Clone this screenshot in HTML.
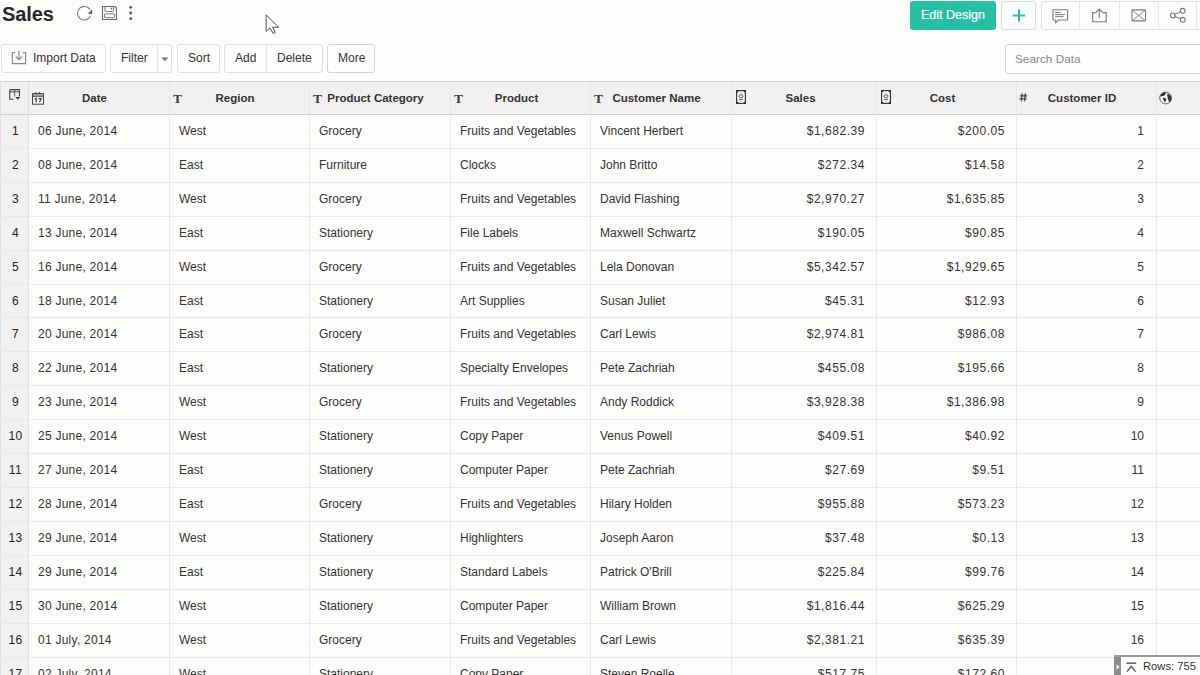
<!DOCTYPE html>
<html><head><meta charset="utf-8">
<style>
*{margin:0;padding:0;box-sizing:border-box}
html,body{width:1200px;height:675px;overflow:hidden;background:#fdfdfb;font-family:"Liberation Sans",sans-serif;color:#333;position:relative}
.abs{position:absolute}
.title{position:absolute;left:2px;top:3px;font-size:20px;font-weight:bold;color:#262626;letter-spacing:-0.1px}
.btn{position:absolute;top:44px;height:29px;border:1px solid #e0e0e0;border-radius:3px;background:#fdfdfd;font-size:12px;color:#333;line-height:27px}
.btn span{position:absolute;top:0}
.sep{position:absolute;top:0;bottom:0;width:1px;background:#e6e6e6}
.edit{position:absolute;left:910px;top:1px;width:86px;height:29px;background:#27bfa3;border-radius:3px;color:#fff;font-size:12.5px;line-height:28px;text-align:center;-webkit-text-stroke:0.2px #fff}
.plus{position:absolute;left:1001px;top:1px;width:35px;height:29px;border:1px solid #dcdcdf;border-radius:3px;background:#fdfdfd}
.grp{position:absolute;left:1041px;top:1px;width:170px;height:29px;border:1px solid #e0e0e2;border-radius:3px;background:#fdfdfd}
.search{position:absolute;left:1005px;top:44px;width:210px;height:30px;border:1px solid #d6d6d6;border-radius:3px;background:#fdfdfd;font-size:11.8px;color:#8a8a8a;line-height:28px;padding-left:9px}
.hdr{position:absolute;left:0;top:81px;width:1200px;height:34px;background:#f1f1f1;border-top:1px solid #d6d6d6;border-bottom:1px solid #d0d0d0;border-left:1px solid #e2e2e2}
.rncol{position:absolute;left:0;top:115px;width:28px;height:560px;background:#f1f1f1;border-left:1px solid #e2e2e2}
.vl{position:absolute;top:82px;height:593px;width:1px;background:#e8e8eb}
.hl{position:absolute;left:0;width:1200px;height:1px;background:#e9e9eb}
.hd{position:absolute;top:82px;height:32px;line-height:32px;font-size:11.5px;font-weight:bold;color:#333;text-align:center}
.ti{position:absolute;top:0;font-family:"Liberation Serif",serif;font-weight:bold;font-size:13.5px;color:#3a3a3a;line-height:15px}
.rn{position:absolute;left:2px;width:27px;height:34px;line-height:32px;text-align:center;font-size:12px;color:#222;letter-spacing:.4px}
.c{position:absolute;height:34px;line-height:32px;font-size:12px;color:#333;padding-left:10px;white-space:nowrap}
.c.d{letter-spacing:.25px}
.c.r{text-align:right;padding-left:0;padding-right:11px;letter-spacing:.55px}
.c.id{padding-right:12px;letter-spacing:0}
.rows{position:absolute;left:1114px;top:655px;width:86px;height:20px;background:#fdfdfd;border-top:2px solid #9a9a9a}
</style></head><body>
<div class="title">Sales</div>
<!-- refresh -->
<svg class="abs" style="left:76px;top:5px" width="17" height="16" viewBox="0 0 17 16">
<path d="M14.1 4.6 A6.8 6.8 0 1 0 14.4 11.3" fill="none" stroke="#7a7a7a" stroke-width="1.1"/>
<path d="M16.2 4.4 L16.2 8.8 L11.8 8.8 Z" fill="#505050"/>
</svg>
<!-- save -->
<svg class="abs" style="left:101px;top:5px" width="17" height="16" viewBox="0 0 17 16">
<path d="M1.5 1.5 H14.2 L15.5 2.8 V14.5 H1.5 Z" fill="none" stroke="#6a6a6a" stroke-width="1.1"/>
<path d="M3.9 1.5 V5.2 Q3.9 6.5 5 6.5 H11.6 Q12.6 6.5 12.6 5.2 V1.5" fill="none" stroke="#7a7a7a" stroke-width="1"/>
<rect x="3.5" y="8.9" width="10" height="3.8" rx="0.6" fill="none" stroke="#7a7a7a" stroke-width="1"/>
<rect x="9.6" y="2.8" width="1.6" height="1.4" fill="#555"/>
</svg>
<!-- dots -->
<svg class="abs" style="left:127px;top:4px" width="8" height="18" viewBox="0 0 8 18">
<circle cx="3.7" cy="3.3" r="1.4" fill="#555"/><circle cx="3.7" cy="9" r="1.4" fill="#555"/><circle cx="3.7" cy="14.7" r="1.4" fill="#555"/>
</svg>
<!-- cursor -->
<svg class="abs" style="left:264px;top:13px" width="18" height="24" viewBox="0 0 18 24">
<path d="M2.1 1.8 L2.1 18.4 L6 15 L9 20.5 L11.3 19.5 L8.6 14.2 L14.6 14.3 Z" fill="#fff" stroke="#505050" stroke-width="1" stroke-linejoin="round"/>
</svg>

<div class="edit">Edit Design</div>
<div class="plus"><svg class="abs" style="left:10px;top:7px" width="14" height="13" viewBox="0 0 14 13"><path d="M7 0.4 V12.4 M0.8 6.4 H13.2" stroke="#27bfa3" stroke-width="2"/></svg></div>
<div class="grp">
  <div class="sep" style="left:37px"></div>
  <div class="sep" style="left:77px"></div>
  <div class="sep" style="left:116px"></div>
  <div class="sep" style="left:154px"></div>
  <!-- comment -->
  <svg class="abs" style="left:10px;top:7px" width="18" height="16" viewBox="0 0 18 16">
  <path d="M1.5 0.8 H15 Q15.6 0.8 15.6 1.4 V10.4 Q15.6 11 15 11 H6.4 L3.4 14 V11 H1.5 Q0.9 11 0.9 10.4 V1.4 Q0.9 0.8 1.5 0.8 Z" fill="none" stroke="#7c7c7c" stroke-width="1.1" stroke-linejoin="round"/>
  <path d="M3.2 3.5 H8.8 M3.2 5.5 H12.8 M3.2 7.4 H11.7" stroke="#808080" stroke-width="1"/>
  </svg>
  <!-- export -->
  <svg class="abs" style="left:49px;top:5px" width="17" height="17" viewBox="0 0 17 17">
  <path d="M3.9 5.6 H1.6 V14.8 H15.2 V5.6 H12.4" fill="none" stroke="#7a7a7a" stroke-width="1.1"/>
  <path d="M8.3 10.8 V2.2 M4.2 6.2 L8.3 2 L12.4 6.2" fill="none" stroke="#7a7a7a" stroke-width="1.1"/>
  </svg>
  <!-- mail -->
  <svg class="abs" style="left:89px;top:6px" width="17" height="15" viewBox="0 0 17 15">
  <rect x="0.9" y="1.9" width="13.6" height="11" rx="0.8" fill="none" stroke="#7a7a7a" stroke-width="1.1"/>
  <path d="M1.2 2.2 L7.7 7.4 L14.2 2.2 M1.2 12.6 L7.7 7.4 L14.2 12.6" fill="none" stroke="#7f7f7f" stroke-width="0.9"/>
  </svg>
  <!-- share -->
  <svg class="abs" style="left:127px;top:5px" width="18" height="18" viewBox="0 0 18 18">
  <circle cx="13.7" cy="3.8" r="2.4" fill="none" stroke="#777" stroke-width="1.1"/>
  <circle cx="3.8" cy="8.4" r="2.4" fill="none" stroke="#777" stroke-width="1.1"/>
  <circle cx="13.7" cy="12.8" r="2.4" fill="none" stroke="#777" stroke-width="1.1"/>
  <path d="M5.9 7.3 L11.6 4.9 M5.9 9.5 L11.6 11.7" stroke="#777" stroke-width="1"/>
  </svg>
</div>

<!-- toolbar -->
<div class="btn" style="left:1px;width:105px">
  <svg class="abs" style="left:9px;top:6px" width="16" height="14" viewBox="0 0 16 14">
  <path d="M4 1.6 H1.3 V12.6 H14.6 V1.6 H12" fill="none" stroke="#8a8a8a" stroke-width="1.2"/>
  <path d="M8 0 V8.4 M4.8 5.4 L8 8.6 L11.2 5.4" fill="none" stroke="#8a8a8a" stroke-width="1.2"/>
  </svg>
  <span style="left:31px">Import Data</span>
</div>
<div class="btn" style="left:110px;width:62px">
  <span style="left:10px">Filter</span>
  <div class="sep" style="left:46px"></div>
  <svg class="abs" style="left:50px;top:12px" width="8" height="5" viewBox="0 0 8 5"><path d="M0.3 0.6 H7.3 L3.8 4.2 Z" fill="#777"/></svg>
</div>
<div class="btn" style="left:177px;width:43px"><span style="left:10px">Sort</span></div>
<div class="btn" style="left:224px;width:99px">
  <span style="left:10px">Add</span>
  <div class="sep" style="left:41px"></div>
  <span style="left:52px">Delete</span>
</div>
<div class="btn" style="left:327px;width:48px;border-color:#d4d4d4"><span style="left:10px">More</span></div>
<div class="search">Search Data</div>

<!-- table -->
<div class="hdr"></div>
<div class="rncol"></div>
<div class="vl" style="left:28px;background:#dedede"></div>
<div class="vl" style="left:169px"></div>
<div class="vl" style="left:309px"></div>
<div class="vl" style="left:450px"></div>
<div class="vl" style="left:590px"></div>
<div class="vl" style="left:731px"></div>
<div class="vl" style="left:876px"></div>
<div class="vl" style="left:1016px"></div>
<div class="vl" style="left:1156px"></div>
<div class="hl" style="top:148px"></div>
<div class="hl" style="top:182px"></div>
<div class="hl" style="top:216px"></div>
<div class="hl" style="top:250px"></div>
<div class="hl" style="top:284px"></div>
<div class="hl" style="top:317px"></div>
<div class="hl" style="top:351px"></div>
<div class="hl" style="top:385px"></div>
<div class="hl" style="top:419px"></div>
<div class="hl" style="top:453px"></div>
<div class="hl" style="top:487px"></div>
<div class="hl" style="top:521px"></div>
<div class="hl" style="top:555px"></div>
<div class="hl" style="top:589px"></div>
<div class="hl" style="top:623px"></div>
<div class="hl" style="top:657px"></div>
<div class="hl" style="top:691px"></div>
<div class="rn" style="top:115px">1</div>
<div class="c d" style="top:115px;left:28px;width:141px">06 June, 2014</div>
<div class="c" style="top:115px;left:169px;width:140px">West</div>
<div class="c" style="top:115px;left:309px;width:141px">Grocery</div>
<div class="c" style="top:115px;left:450px;width:140px">Fruits and Vegetables</div>
<div class="c" style="top:115px;left:590px;width:141px">Vincent Herbert</div>
<div class="c r" style="top:115px;left:731px;width:145px">$1,682.39</div>
<div class="c r" style="top:115px;left:876px;width:140px">$200.05</div>
<div class="c r id" style="top:115px;left:1016px;width:140px">1</div>
<div class="rn" style="top:149px">2</div>
<div class="c d" style="top:149px;left:28px;width:141px">08 June, 2014</div>
<div class="c" style="top:149px;left:169px;width:140px">East</div>
<div class="c" style="top:149px;left:309px;width:141px">Furniture</div>
<div class="c" style="top:149px;left:450px;width:140px">Clocks</div>
<div class="c" style="top:149px;left:590px;width:141px">John Britto</div>
<div class="c r" style="top:149px;left:731px;width:145px">$272.34</div>
<div class="c r" style="top:149px;left:876px;width:140px">$14.58</div>
<div class="c r id" style="top:149px;left:1016px;width:140px">2</div>
<div class="rn" style="top:183px">3</div>
<div class="c d" style="top:183px;left:28px;width:141px">11 June, 2014</div>
<div class="c" style="top:183px;left:169px;width:140px">West</div>
<div class="c" style="top:183px;left:309px;width:141px">Grocery</div>
<div class="c" style="top:183px;left:450px;width:140px">Fruits and Vegetables</div>
<div class="c" style="top:183px;left:590px;width:141px">David Flashing</div>
<div class="c r" style="top:183px;left:731px;width:145px">$2,970.27</div>
<div class="c r" style="top:183px;left:876px;width:140px">$1,635.85</div>
<div class="c r id" style="top:183px;left:1016px;width:140px">3</div>
<div class="rn" style="top:217px">4</div>
<div class="c d" style="top:217px;left:28px;width:141px">13 June, 2014</div>
<div class="c" style="top:217px;left:169px;width:140px">East</div>
<div class="c" style="top:217px;left:309px;width:141px">Stationery</div>
<div class="c" style="top:217px;left:450px;width:140px">File Labels</div>
<div class="c" style="top:217px;left:590px;width:141px">Maxwell Schwartz</div>
<div class="c r" style="top:217px;left:731px;width:145px">$190.05</div>
<div class="c r" style="top:217px;left:876px;width:140px">$90.85</div>
<div class="c r id" style="top:217px;left:1016px;width:140px">4</div>
<div class="rn" style="top:251px">5</div>
<div class="c d" style="top:251px;left:28px;width:141px">16 June, 2014</div>
<div class="c" style="top:251px;left:169px;width:140px">West</div>
<div class="c" style="top:251px;left:309px;width:141px">Grocery</div>
<div class="c" style="top:251px;left:450px;width:140px">Fruits and Vegetables</div>
<div class="c" style="top:251px;left:590px;width:141px">Lela Donovan</div>
<div class="c r" style="top:251px;left:731px;width:145px">$5,342.57</div>
<div class="c r" style="top:251px;left:876px;width:140px">$1,929.65</div>
<div class="c r id" style="top:251px;left:1016px;width:140px">5</div>
<div class="rn" style="top:285px">6</div>
<div class="c d" style="top:285px;left:28px;width:141px">18 June, 2014</div>
<div class="c" style="top:285px;left:169px;width:140px">East</div>
<div class="c" style="top:285px;left:309px;width:141px">Stationery</div>
<div class="c" style="top:285px;left:450px;width:140px">Art Supplies</div>
<div class="c" style="top:285px;left:590px;width:141px">Susan Juliet</div>
<div class="c r" style="top:285px;left:731px;width:145px">$45.31</div>
<div class="c r" style="top:285px;left:876px;width:140px">$12.93</div>
<div class="c r id" style="top:285px;left:1016px;width:140px">6</div>
<div class="rn" style="top:318px">7</div>
<div class="c d" style="top:318px;left:28px;width:141px">20 June, 2014</div>
<div class="c" style="top:318px;left:169px;width:140px">East</div>
<div class="c" style="top:318px;left:309px;width:141px">Grocery</div>
<div class="c" style="top:318px;left:450px;width:140px">Fruits and Vegetables</div>
<div class="c" style="top:318px;left:590px;width:141px">Carl Lewis</div>
<div class="c r" style="top:318px;left:731px;width:145px">$2,974.81</div>
<div class="c r" style="top:318px;left:876px;width:140px">$986.08</div>
<div class="c r id" style="top:318px;left:1016px;width:140px">7</div>
<div class="rn" style="top:352px">8</div>
<div class="c d" style="top:352px;left:28px;width:141px">22 June, 2014</div>
<div class="c" style="top:352px;left:169px;width:140px">East</div>
<div class="c" style="top:352px;left:309px;width:141px">Stationery</div>
<div class="c" style="top:352px;left:450px;width:140px">Specialty Envelopes</div>
<div class="c" style="top:352px;left:590px;width:141px">Pete Zachriah</div>
<div class="c r" style="top:352px;left:731px;width:145px">$455.08</div>
<div class="c r" style="top:352px;left:876px;width:140px">$195.66</div>
<div class="c r id" style="top:352px;left:1016px;width:140px">8</div>
<div class="rn" style="top:386px">9</div>
<div class="c d" style="top:386px;left:28px;width:141px">23 June, 2014</div>
<div class="c" style="top:386px;left:169px;width:140px">West</div>
<div class="c" style="top:386px;left:309px;width:141px">Grocery</div>
<div class="c" style="top:386px;left:450px;width:140px">Fruits and Vegetables</div>
<div class="c" style="top:386px;left:590px;width:141px">Andy Roddick</div>
<div class="c r" style="top:386px;left:731px;width:145px">$3,928.38</div>
<div class="c r" style="top:386px;left:876px;width:140px">$1,386.98</div>
<div class="c r id" style="top:386px;left:1016px;width:140px">9</div>
<div class="rn" style="top:420px">10</div>
<div class="c d" style="top:420px;left:28px;width:141px">25 June, 2014</div>
<div class="c" style="top:420px;left:169px;width:140px">West</div>
<div class="c" style="top:420px;left:309px;width:141px">Stationery</div>
<div class="c" style="top:420px;left:450px;width:140px">Copy Paper</div>
<div class="c" style="top:420px;left:590px;width:141px">Venus Powell</div>
<div class="c r" style="top:420px;left:731px;width:145px">$409.51</div>
<div class="c r" style="top:420px;left:876px;width:140px">$40.92</div>
<div class="c r id" style="top:420px;left:1016px;width:140px">10</div>
<div class="rn" style="top:454px">11</div>
<div class="c d" style="top:454px;left:28px;width:141px">27 June, 2014</div>
<div class="c" style="top:454px;left:169px;width:140px">East</div>
<div class="c" style="top:454px;left:309px;width:141px">Stationery</div>
<div class="c" style="top:454px;left:450px;width:140px">Computer Paper</div>
<div class="c" style="top:454px;left:590px;width:141px">Pete Zachriah</div>
<div class="c r" style="top:454px;left:731px;width:145px">$27.69</div>
<div class="c r" style="top:454px;left:876px;width:140px">$9.51</div>
<div class="c r id" style="top:454px;left:1016px;width:140px">11</div>
<div class="rn" style="top:488px">12</div>
<div class="c d" style="top:488px;left:28px;width:141px">28 June, 2014</div>
<div class="c" style="top:488px;left:169px;width:140px">East</div>
<div class="c" style="top:488px;left:309px;width:141px">Grocery</div>
<div class="c" style="top:488px;left:450px;width:140px">Fruits and Vegetables</div>
<div class="c" style="top:488px;left:590px;width:141px">Hilary Holden</div>
<div class="c r" style="top:488px;left:731px;width:145px">$955.88</div>
<div class="c r" style="top:488px;left:876px;width:140px">$573.23</div>
<div class="c r id" style="top:488px;left:1016px;width:140px">12</div>
<div class="rn" style="top:522px">13</div>
<div class="c d" style="top:522px;left:28px;width:141px">29 June, 2014</div>
<div class="c" style="top:522px;left:169px;width:140px">West</div>
<div class="c" style="top:522px;left:309px;width:141px">Stationery</div>
<div class="c" style="top:522px;left:450px;width:140px">Highlighters</div>
<div class="c" style="top:522px;left:590px;width:141px">Joseph Aaron</div>
<div class="c r" style="top:522px;left:731px;width:145px">$37.48</div>
<div class="c r" style="top:522px;left:876px;width:140px">$0.13</div>
<div class="c r id" style="top:522px;left:1016px;width:140px">13</div>
<div class="rn" style="top:556px">14</div>
<div class="c d" style="top:556px;left:28px;width:141px">29 June, 2014</div>
<div class="c" style="top:556px;left:169px;width:140px">East</div>
<div class="c" style="top:556px;left:309px;width:141px">Stationery</div>
<div class="c" style="top:556px;left:450px;width:140px">Standard Labels</div>
<div class="c" style="top:556px;left:590px;width:141px">Patrick O&#x27;Brill</div>
<div class="c r" style="top:556px;left:731px;width:145px">$225.84</div>
<div class="c r" style="top:556px;left:876px;width:140px">$99.76</div>
<div class="c r id" style="top:556px;left:1016px;width:140px">14</div>
<div class="rn" style="top:590px">15</div>
<div class="c d" style="top:590px;left:28px;width:141px">30 June, 2014</div>
<div class="c" style="top:590px;left:169px;width:140px">West</div>
<div class="c" style="top:590px;left:309px;width:141px">Stationery</div>
<div class="c" style="top:590px;left:450px;width:140px">Computer Paper</div>
<div class="c" style="top:590px;left:590px;width:141px">William Brown</div>
<div class="c r" style="top:590px;left:731px;width:145px">$1,816.44</div>
<div class="c r" style="top:590px;left:876px;width:140px">$625.29</div>
<div class="c r id" style="top:590px;left:1016px;width:140px">15</div>
<div class="rn" style="top:624px">16</div>
<div class="c d" style="top:624px;left:28px;width:141px">01 July, 2014</div>
<div class="c" style="top:624px;left:169px;width:140px">West</div>
<div class="c" style="top:624px;left:309px;width:141px">Grocery</div>
<div class="c" style="top:624px;left:450px;width:140px">Fruits and Vegetables</div>
<div class="c" style="top:624px;left:590px;width:141px">Carl Lewis</div>
<div class="c r" style="top:624px;left:731px;width:145px">$2,381.21</div>
<div class="c r" style="top:624px;left:876px;width:140px">$635.39</div>
<div class="c r id" style="top:624px;left:1016px;width:140px">16</div>
<div class="rn" style="top:658px">17</div>
<div class="c d" style="top:658px;left:28px;width:141px">02 July, 2014</div>
<div class="c" style="top:658px;left:169px;width:140px">West</div>
<div class="c" style="top:658px;left:309px;width:141px">Stationery</div>
<div class="c" style="top:658px;left:450px;width:140px">Copy Paper</div>
<div class="c" style="top:658px;left:590px;width:141px">Steven Roelle</div>
<div class="c r" style="top:658px;left:731px;width:145px">$517.75</div>
<div class="c r" style="top:658px;left:876px;width:140px">$172.60</div>
<div class="c r id" style="top:658px;left:1016px;width:140px">17</div>

<!-- header labels -->
<svg class="abs" style="left:8px;top:88px" width="14" height="14" viewBox="0 0 14 14">
<path d="M1.8 1.6 H11.4 V8.4 M1.8 1.6 V11.2 H5.6" fill="none" stroke="#3c3c3c" stroke-width="1.1"/>
<path d="M1.8 3.8 H11.4" stroke="#555" stroke-width="1"/>
<path d="M6.7 1.6 V8.4" stroke="#555" stroke-width="1"/>
<path d="M7.4 9.1 H12.2 L9.8 11.8 Z" fill="#333"/>
</svg>
<svg class="abs" style="left:31px;top:91px" width="14" height="14" viewBox="0 0 14 14">
<rect x="1.5" y="2.6" width="11" height="10.6" fill="#fbfbfb" stroke="#444" stroke-width="1"/>
<rect x="2" y="3.1" width="10" height="2.1" fill="#999"/>
<path d="M1.5 5.6 H12.5" stroke="#444" stroke-width="0.8"/>
<path d="M4.8 1 V3 M8.6 1 V3" stroke="#444" stroke-width="1"/>
<path d="M3.8 8.4 L5.2 7.4 V11.2 M7.4 7.6 H10.2 L8.4 11.2" fill="none" stroke="#444" stroke-width="1.2"/>
</svg>
<div class="hd" style="left:28px;width:133px">Date</div>
<div class="ti" style="left:173px;top:91px">T</div>
<div class="hd" style="left:169px;width:132px">Region</div>
<div class="ti" style="left:313px;top:91px">T</div>
<div class="hd" style="left:309px;width:133px">Product Category</div>
<div class="ti" style="left:454px;top:91px">T</div>
<div class="hd" style="left:450px;width:133px">Product</div>
<div class="ti" style="left:594px;top:91px">T</div>
<div class="hd" style="left:590px;width:133px">Customer Name</div>
<svg class="abs" style="left:736px;top:90px" width="10" height="14" viewBox="0 0 10 14">
<rect x="0.6" y="0.6" width="8.8" height="12.8" fill="#fbfbfb" stroke="#383838" stroke-width="1.2"/>
<path d="M0 0 H3 Q2.6 2.4 0 2.8 Z M10 0 H7 Q7.4 2.4 10 2.8 Z M0 14 H3 Q2.6 11.6 0 11.2 Z M10 14 H7 Q7.4 11.6 10 11.2 Z" fill="#333"/>
<rect x="3.2" y="4.9" width="3.6" height="2.6" rx="1.1" fill="none" stroke="#444" stroke-width="0.95"/>
<path d="M2.9 9.4 H7.1" stroke="#444" stroke-width="0.9"/>
<path d="M5 1.8 V4.2 M5 10.3 V12" stroke="#9a9a9a" stroke-width="0.6"/>
</svg>
<div class="hd" style="left:731px;width:139px">Sales</div>
<svg class="abs" style="left:881px;top:90px" width="10" height="14" viewBox="0 0 10 14">
<rect x="0.6" y="0.6" width="8.8" height="12.8" fill="#fbfbfb" stroke="#383838" stroke-width="1.2"/>
<path d="M0 0 H3 Q2.6 2.4 0 2.8 Z M10 0 H7 Q7.4 2.4 10 2.8 Z M0 14 H3 Q2.6 11.6 0 11.2 Z M10 14 H7 Q7.4 11.6 10 11.2 Z" fill="#333"/>
<rect x="3.2" y="4.9" width="3.6" height="2.6" rx="1.1" fill="none" stroke="#444" stroke-width="0.95"/>
<path d="M2.9 9.4 H7.1" stroke="#444" stroke-width="0.9"/>
<path d="M5 1.8 V4.2 M5 10.3 V12" stroke="#9a9a9a" stroke-width="0.6"/>
</svg>
<div class="hd" style="left:876px;width:133px">Cost</div>
<svg class="abs" style="left:1019px;top:93px" width="9" height="9" viewBox="0 0 9 9">
<path d="M3.2 0.4 L2.3 8.2 M6.4 0.4 L5.5 8.2 M0.8 2.8 H8.2 M0.3 5.8 H7.7" stroke="#444" stroke-width="1.3"/>
</svg>
<div class="hd" style="left:1016px;width:132px">Customer ID</div>
<svg class="abs" style="left:1158px;top:91px" width="15" height="15" viewBox="0 0 15 15">
<circle cx="7.6" cy="7" r="5.9" fill="#fcfcfc" stroke="#555" stroke-width="0.9"/>
<path d="M2.2 5.4 Q2.8 2.4 6.2 1.3 L7.9 1.5 Q8.2 3 6.8 4 Q5.4 5.8 3.4 5.2 Z" fill="#333"/>
<path d="M5 6.9 Q6.8 6.5 7.7 7.5 Q8.9 8.5 8.1 9.6 L7.1 11.2 Q5.8 10.5 5.6 9.1 Q4.7 8 5 6.9 Z" fill="#333"/>
<path d="M9.5 2.4 Q12.8 3.6 13.5 7 Q13.4 10 11.5 11.2 Q10.2 10.1 10.4 8.7 Q9.1 7.7 9.6 6 Q8.8 4.2 9.5 2.4 Z" fill="#333"/>
</svg>

<!-- rows box -->
<div class="rows">
  <div class="abs" style="left:0;top:0;width:7px;height:18px;background:#8c8c8c"></div>
  <svg class="abs" style="left:2px;top:7px" width="4" height="6" viewBox="0 0 4 6"><path d="M0.5 0.3 L3.6 3 L0.5 5.7 Z" fill="#fff"/></svg>
  <svg class="abs" style="left:12px;top:5px" width="11" height="11" viewBox="0 0 11 11">
  <path d="M0.4 1.2 H10.2" stroke="#555" stroke-width="1.4"/>
  <path d="M1 9.6 L5.3 4.4 L9.6 9.6" fill="none" stroke="#555" stroke-width="1.4"/>
  </svg>
  <div class="abs" style="left:29px;top:2px;font-size:11.2px;color:#333;line-height:14px">Rows: 755</div>
</div>
</body></html>
